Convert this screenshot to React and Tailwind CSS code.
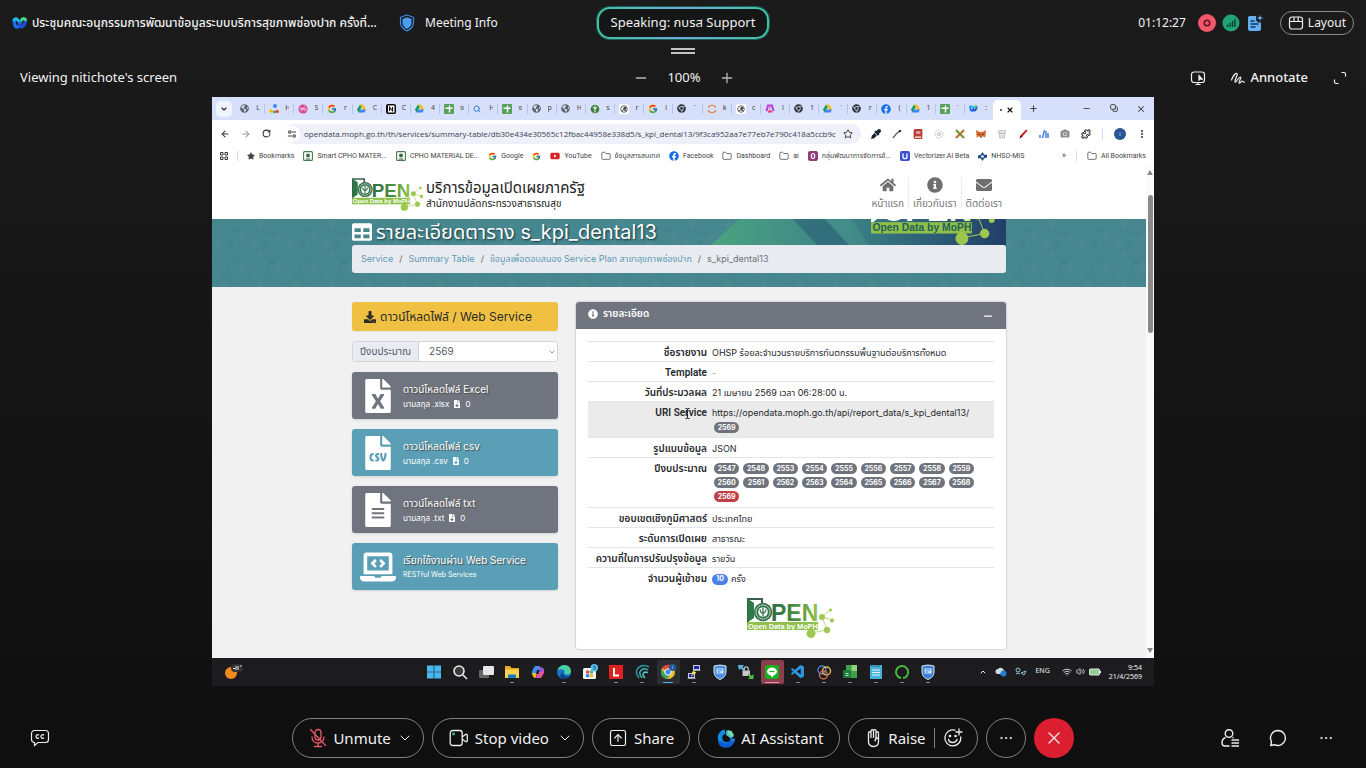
import React from 'react';
import {
  Minus, Plus, X, ChevronDown, ChevronUp, Ellipsis, ArrowLeft, ArrowRight, RotateCw, Star,
  Folder, Copy, Search, Puzzle, EllipsisVertical, Wifi, Volume2, SquareArrowUp,
} from 'lucide-react';
import {
  FaHome, FaInfoCircle, FaEnvelope, FaDownload, FaTable, FaFileExcel, FaFileCsv, FaFileAlt, FaLaptopCode,
  FaFileDownload, FaFacebook, FaYoutube, FaStar, FaChrome, FaGlobeAmericas, FaCamera, FaEyeDropper, FaBook,
} from 'react-icons/fa';
import { FcGoogle } from 'react-icons/fc';
import { VscVscode } from 'react-icons/vsc';

const uiFont = "font-['Noto_Sans','Noto_Sans_Thai',sans-serif]";
const webFont = "font-['Inter','Noto_Sans_Thai',sans-serif]";

/* ---------- small drawings ---------- */

function WebexMark({ className = 'h-4 w-4' }) {
  return (
    <svg className={`shrink-0 ${className}`} viewBox="0 0 16 16" fill="none" strokeLinecap="round">
      <path d="M2.200 5c0 4 1 7 2.800 7S8 9 8.300 6.500" stroke="#1f6feb" strokeWidth="3.400" />
      <path d="M7.500 10.500c2.500 3.500 5.500-.5 6-5.500" stroke="#1d4ed8" strokeWidth="3.400" />
      <path d="M2.200 4.800c.8-1.800 3-1.500 4 1" stroke="#22b8f0" strokeWidth="3" />
      <path d="M9.500 5c1-2 3-2 4-.3" stroke="#3ddc84" strokeWidth="3" />
    </svg>
  );
}

function Shield() {
  return (
    <svg className="h-[18px] w-4" viewBox="0 0 16 18">
      <path d="M8 1l6.500 2.300v5.500c0 4-3 6.600-6.500 8.200C4.500 15.400 1.500 12.800 1.500 8.800V3.300z" fill="none" stroke="#3b8ee8" strokeWidth="1.200" />
      <path d="M8 3.300l4.500 1.600v4c0 2.800-2 4.700-4.500 6-2.500-1.300-4.500-3.200-4.500-6v-4z" fill="#4a9df0" />
    </svg>
  );
}

function DriveIcon() {
  return (
    <svg className="h-[9px] w-[9px]" viewBox="0 0 18 16">
      <path d="M6 0h6l6 10h-6z" fill="#fbbc04" />
      <path d="M6 0L0 10l3 6 6-10.500z" fill="#0f9d58" />
      <path d="M3 16h12l3-6H6z" fill="#4285f4" />
    </svg>
  );
}

function SheetIcon() {
  return (
    <svg className="h-[10px] w-[10px]" viewBox="0 0 10 10">
      <rect width="10" height="10" rx="1" fill="#57a05a" />
      <path d="M5.500 1.500v7M1.500 4.200h7" stroke="#fff" strokeWidth="1.400" />
    </svg>
  );
}

function DotsIcon() {
  return (
    <svg className="h-[10px] w-[10px]" viewBox="0 0 10 10">
      <circle cx="6" cy="2" r="2" fill="#4285f4" /><circle cx="2" cy="7" r="1.800" fill="#fbbc04" />
      <circle cx="8" cy="7.500" r="1.800" fill="#ea4335" /><circle cx="5" cy="8" r="1.200" fill="#34a853" />
    </svg>
  );
}

function BadgeIcon({ bg, fg = '#fff', mark = 'ring' }) {
  return (
    <svg className="h-[10px] w-[10px]" viewBox="0 0 10 10">
      <rect width="10" height="10" rx="2" fill={bg} />
      {mark === 'ring' && <ellipse cx="5" cy="5" rx="1.700" ry="2.500" fill="none" stroke={fg} strokeWidth="1.200" />}
      {mark === 'n' && <><rect x="1.500" y="1" width="7.500" height="8" rx="1" fill="#fff" stroke="#111" /><path d="M3.600 7V3.200l3 3.600V3" fill="none" stroke="#111" strokeWidth="1.100" /></>}
      {mark === 'v' && <path d="M3 2.500v3.200a2 2 0 004 0V2.500" fill="none" stroke={fg} strokeWidth="1.300" />}
      {mark === 'face' && <><circle cx="5" cy="5" r="3.300" fill="none" stroke={fg} strokeWidth=".8" /><circle cx="5.800" cy="4.300" r="1.500" fill={fg} /><path d="M2.500 7q2-2.500 5 0" stroke={fg} fill="none" /></>}
    </svg>
  );
}

function SealIcon({ edge = '#4a7a4c' }) {
  return (
    <svg className="h-[10px] w-[10px]" viewBox="0 0 10 10">
      <rect x=".6" y=".6" width="8.800" height="8.800" rx="1" fill="#fff" stroke={edge} strokeWidth="1.100" />
      <circle cx="5" cy="4.500" r="2" fill="#3f6b43" /><path d="M3 8h4" stroke="#3f6b43" />
    </svg>
  );
}

function TabMark({ kind }) {
  switch (kind) {
    case 'globe': return <FaGlobeAmericas className="h-[9px] w-[9px] text-[#5f6368]" />;
    case 'dots': return <DotsIcon />;
    case 'pink': return <svg className="h-[10px] w-[10px]" viewBox="0 0 10 10"><circle cx="5" cy="5" r="4.600" fill="#d54a94" /><path d="M2 3l6 4M3 7.500l4-5.500M1 5h8" stroke="#fbd3e8" strokeWidth=".8" /></svg>;
    case 'google': return <FcGoogle className="h-[10px] w-[10px]" />;
    case 'drive': return <DriveIcon />;
    case 'n': return <BadgeIcon bg="#111" mark="n" />;
    case 'sheet': return <SheetIcon />;
    case 'search': return <Search className="h-[8px] w-[8px] text-[#3b78d8]" strokeWidth={3} />;
    case 'moph': return <svg className="h-[10px] w-[10px]" viewBox="0 0 10 10"><circle cx="5" cy="5" r="4.300" fill="#3d7f3a" /><path d="M5 1.500v7M2.800 3.500q2.200 2 4.400 0" stroke="#fff" fill="none" /></svg>;
    case 'face': return <BadgeIcon bg="#fff" fg="#444" mark="face" />;
    case 'chrome': return <FaChrome className="h-[9px] w-[9px] text-[#30343b]" />;
    case 'jupyter': return <svg className="h-[10px] w-[10px]" viewBox="0 0 10 10" fill="none" stroke="#e8833a" strokeWidth="1.200"><path d="M1 3.500Q5-1 9 3.500M1 6.500Q5 11 9 6.500" /></svg>;
    case 'a': return <svg className="h-[10px] w-[10px]" viewBox="0 0 10 10" fill="none" strokeWidth="2"><path d="M1.500 7L3 1.500h4L8.500 7" stroke="#b53de0" /><path d="M3 8l2-1 2 1" stroke="#ec3f7c" /><path d="M5 3v2" stroke="#ec3f7c" strokeWidth="1" /></svg>;
    case 'fb': return <FaFacebook className="h-[10px] w-[10px] text-[#1b6ee6]" />;
    default: return <WebexMark className="h-[9px] w-[9px]" />;
  }
}

const tabs = [
  ['globe', 'L'], ['dots', 'H'], ['pink', 'S'], ['google', 'r'], ['drive', 'C'], ['n', 'C'], ['drive', '4'],
  ['sheet', 'ง'], ['search', 'H'], ['sheet', 'ง'], ['globe', 'p'], ['globe', 'H'], ['moph', 'ร'], ['face', 'r'],
  ['google', 'l'], ['chrome', 'ˋ'], ['jupyter', 'k'], ['face', 'c'], ['a', 'l'], ['chrome', '1'], ['drive', 'ˊ'],
  ['chrome', 'r'], ['fb', '('], ['drive', '1'], ['sheet', 'ˊ'],
];

const fileItems = [
  { Icon: FaFileExcel, title: 'ดาวน์โหลดไฟล์ Excel', ext: 'นามสกุล .xlsx', tone: 'bg-[#70747e]' },
  { Icon: FaFileCsv, title: 'ดาวน์โหลดไฟล์ csv', ext: 'นามสกุล .csv', tone: 'bg-[#5a9fb5]' },
  { Icon: FaFileAlt, title: 'ดาวน์โหลดไฟล์ txt', ext: 'นามสกุล .txt', tone: 'bg-[#70747e]' },
];

const years = ['2547', '2548', '2553', '2554', '2555', '2556', '2557', '2558', '2559', '2560', '2561', '2562', '2563', '2564', '2565', '2566', '2567', '2568', '2569'];

function OpenLogo({ className, id, light }) {
  return (
    <svg className={className} viewBox="0 0 88 40" role="img" aria-label="OPEN Data by MoPH">
      <defs>
        <linearGradient id={id} x1="0" x2="1" y1="0" y2="0">
          <stop offset="0" stopColor={light ? '#ffffff' : '#2d6b45'} />
          <stop offset=".55" stopColor={light ? '#ffffff' : '#4c9040'} />
          <stop offset="1" stopColor={light ? '#d4e89a' : '#93c54b'} />
        </linearGradient>
      </defs>
      <path d="M0 0h16v6h-2V2H2v22H0z" fill={light ? '#fff' : '#3f5f4d'} />
      <path d="M1 1l6 4v15l-6 4z" fill={light ? '#fff' : '#2c7a46'} />
      <circle cx="16" cy="14" r="9.200" fill={light ? '#fff' : '#35734c'} />
      <circle cx="16" cy="14" r="7" fill="none" stroke={light ? '#2b6a78' : '#fff'} strokeWidth="1" strokeDasharray="1.500 .7" />
      <circle cx="16" cy="14" r="4.800" fill={light ? '#2b6a78' : '#fff'} />
      <path d="M16 9.500v9M13.200 11.500q0 3.500 2.800 3.500t2.800-3.500" fill="none" stroke={light ? '#fff' : '#35734c'} strokeWidth="1.300" />
      <text x="24" y="23" fontSize="23" fontWeight="700" fontFamily="Liberation Sans, sans-serif" fill={`url(#${id})`}>PEN</text>
      <rect x="0" y="24" width="71" height="8" fill="#8fc04a" />
      <g stroke="#a3cc55" strokeWidth=".7" fill="#9bc84d">
        <path d="M64 35l16-3-5-13 8-7M75 19l10 3" fill="none" />
        <circle cx="64" cy="35.500" r="4.200" /><circle cx="75" cy="19" r="2.800" /><circle cx="83.500" cy="12" r="1.300" />
        <circle cx="85" cy="22.500" r="1.800" /><circle cx="80" cy="32" r="3" />
      </g>
      <text x="1" y="30.500" fontSize="7.300" fontWeight="700" fontFamily="Liberation Sans, sans-serif" fill={light ? '#255f56' : '#fff'}>Open Data by MoPH</text>
    </svg>
  );
}

/* ---------- meeting chrome ---------- */

function MeetingHeader() {
  return (
    <header className="text-[#f2f2f2]">
      <div className="grid h-[46px] grid-cols-[1fr_auto_1fr] items-center pl-3 pr-3">
        <div className="flex items-center">
          <WebexMark />
          <h1 className="ml-1 w-[347px] truncate text-xs font-medium">ประชุมคณะอนุกรรมการพัฒนาข้อมูลระบบบริการสุขภาพช่องปาก ครั้งที่ 1/2569</h1>
          <button className="ml-5 flex items-center gap-2.5 text-xs"><Shield />Meeting Info</button>
        </div>
        <div className="rounded-[13px] bg-linear-to-r from-[#3cc2a4] via-[#6aa9d8] to-[#3cc2a4] p-0.5 ring-1 ring-[#1f5c56]">
          <div className="flex h-7 items-center rounded-[11px] bg-[#151616] px-3 text-[13px]">Speaking: กบรส Support</div>
        </div>
        <div className="flex items-center justify-end">
          <span className="mr-3 text-xs">01:12:27</span>
          <svg className="mr-1.5 h-[18px] w-[18px]" viewBox="0 0 18 18"><circle cx="9" cy="9" r="9" fill="#f4566b" /><circle cx="9" cy="9" r="2.800" fill="none" stroke="#5a1620" strokeWidth="1.500" /></svg>
          <svg className="mr-1.5 h-[18px] w-[18px]" viewBox="0 0 18 18"><circle cx="9" cy="9" r="8.500" fill="#1fa577" /><path d="M5.500 13v-2.500M8 13V9M10.500 13V7M13 13V5" stroke="#0c3f31" strokeWidth="1.400" /></svg>
          <svg className="h-[18px] w-[18px]" viewBox="0 0 18 18"><path d="M3 2h7v4l2 2.500h3V15a2 2 0 01-2 2H4a2 2 0 01-2-2V3.500z" fill="#64b0f5" /><path d="M14 0l1 3 3 1-3 1-1 3-1-3-3-1 3-1z" fill="#64b0f5" stroke="#1a1a1a" strokeWidth=".5" /><path d="M4.500 7h4M4.500 10h8M4.500 13h5" stroke="#173a5c" strokeWidth="1.300" /></svg>
          <button className="ml-4 flex h-6 items-center gap-1 rounded-full border border-[#8a8a8a] px-[7px] text-xs">
            <svg className="h-4 w-4" viewBox="0 0 16 16" fill="none" stroke="currentColor" strokeWidth="1.200"><rect x="1.500" y="2" width="13" height="12" rx="2.500" /><path d="M1.500 6.500h13M6 2v4.500M10.200 2v4.500" /></svg>
            Layout
          </button>
        </div>
      </div>
      <div className="flex h-3 flex-col items-center gap-0.5 pt-0.5">
        <span className="h-0.5 w-6 bg-[#c4c4c4]" />
        <span className="h-0.5 w-6 bg-[#c4c4c4]" />
      </div>
      <div className="grid h-[39px] grid-cols-[1fr_auto_1fr] items-center pl-5 pr-[18px]">
        <p className="text-[13px]">Viewing nitichote's screen</p>
        <div className="flex items-center gap-[18px] text-[13px]">
          <button aria-label="Zoom out"><Minus className="h-4 w-4 text-[#b5b5b5]" /></button>
          <span>100%</span>
          <button aria-label="Zoom in"><Plus className="h-4 w-4 text-[#b5b5b5]" /></button>
        </div>
        <div className="flex items-center justify-end gap-6">
          <button aria-label="Remote control">
            <svg className="h-4 w-4" viewBox="0 0 16 16" fill="none" stroke="#f0f0f0" strokeWidth="1.200"><rect x="1.500" y="2" width="13" height="10.500" rx="2.500" /><path d="M5.500 14.500h5M8 12.500v2" /><path d="M9 5.500v4.500l1.200-1.200 1.800.2z" fill="#f0f0f0" /></svg>
          </button>
          <button className="flex items-center gap-1 text-[13px] font-medium">
            <svg className="h-4 w-4" viewBox="0 0 16 16" fill="none" stroke="#f0f0f0" strokeWidth="1.200" strokeLinecap="round"><path d="M1.500 10C3 6 5.500 3 7 3.500S4 11 5 12s4-5.500 5.500-5-2.500 5-1.500 6 2-2 3-2 .5 1.500 2.500 1" /></svg>
            Annotate
          </button>
          <button aria-label="Full screen">
            <svg className="h-4 w-4" viewBox="0 0 16 16" fill="none" stroke="#f0f0f0" strokeWidth="1.200"><path d="M9.500 2.500h2.500a1.500 1.500 0 011.500 1.500v2.500M2.500 9.500v2.500a1.500 1.500 0 001.500 1.500h2.500" /></svg>
          </button>
        </div>
      </div>
    </header>
  );
}

function Pill({ children, className = '' }) {
  return <div className={`flex h-10 items-center rounded-full border border-[#828282] text-[15px] text-[#f2f2f2] ${className}`}>{children}</div>;
}

function MeetingControls() {
  return (
    <footer className="grid grid-cols-[1fr_auto_1fr] items-center px-[28px] pb-2.5 pt-8 text-[#ededed]">
      <div><button aria-label="Closed captions" className="flex h-6 w-6 items-center justify-center">
        <svg className="h-5 w-5" viewBox="0 0 20 20" fill="none" stroke="currentColor" strokeWidth="1.200"><path d="M4.500 2.500h11a3 3 0 013 3v6a3 3 0 01-3 3H8l-3.500 3V14.500a3 3 0 01-3-3v-6a3 3 0 013-3z" /><path d="M9 7.200a1.800 1.800 0 100 2.600M14 7.200a1.800 1.800 0 100 2.600" /></svg>
      </button></div>
      <div className="flex items-center gap-2">
        <Pill className="gap-1.5 pl-4 pr-2.5">
          <button className="flex items-center gap-1.5">
            <svg className="h-5 w-[18px]" viewBox="0 0 18 20" fill="none" stroke="#e85a66" strokeWidth="1.300" strokeLinecap="round"><rect x="6" y="1.500" width="6" height="10.500" rx="3" /><path d="M3 9c0 3.500 2.500 6 6 6s6-2.500 6-6M9 15v3.500M5.500 18.500h7M1.500 1.500l15 16" /></svg>
            Unmute
          </button>
          <button aria-label="Audio options"><ChevronDown className="h-4 w-4" strokeWidth={1.5} /></button>
        </Pill>
        <Pill className="gap-2 pl-4 pr-2.5">
          <button className="flex items-center gap-1.5">
            <svg className="h-5 w-5" viewBox="0 0 20 20" fill="none" stroke="#ededed" strokeWidth="1.300"><rect x="1.200" y="2.500" width="12" height="15" rx="2.500" /><path d="M13.200 9l3.300-2.500c1-.6 1.800-.2 1.800.8v5.400c0 1-.8 1.400-1.800.8L13.200 11" /><circle cx="4.500" cy="6" r=".8" fill="#2fbf8f" stroke="#2fbf8f" /></svg>
            Stop video
          </button>
          <button aria-label="Video options"><ChevronDown className="h-4 w-4" strokeWidth={1.5} /></button>
        </Pill>
        <button><Pill className="gap-1.5 px-[15px]"><SquareArrowUp className="h-5 w-5" strokeWidth={1.4} />Share</Pill></button>
        <button><Pill className="gap-1 px-4">
          <svg className="h-[22px] w-[22px]" viewBox="0 0 22 22" fill="none" strokeWidth="4.500"><path d="M10 4.500a6.500 6.500 0 108 7" stroke="#1389e8" /><path d="M5 15a6.500 6.500 0 0012-1" stroke="#0b5fd0" /><path d="M12.500 3l4 1 2.500 4-3 2-3.500-3z" fill="#6ee0a0" stroke="none" /><path d="M12 3.500v4l4 3 2.500-2" stroke="#54cbe8" strokeWidth="1.500" /></svg>
          AI Assistant
        </Pill></button>
        <Pill className="gap-2 pl-4 pr-3.5">
          <button className="flex items-center gap-1.5">
            <svg className="h-5 w-[17px]" viewBox="0 0 17 20" fill="none" stroke="#ededed" strokeWidth="1.300" strokeLinejoin="round"><path d="M3.500 11V5a1.200 1.200 0 012.500 0V3a1.200 1.200 0 012.500 0v-.2a1.200 1.200 0 012.500.2v2a1.200 1.200 0 012.500 0v8.500c0 3-2 5-5 5s-4.500-2-5-4zM6 5v5M8.500 3v7M11 5v5M13.500 10c-2.500 0-3.500 2-3.500 3.500" /></svg>
            Raise
          </button>
          <span className="h-5 w-px bg-[#828282]" />
          <button aria-label="Reactions">
            <svg className="h-5 w-5" viewBox="0 0 20 20" fill="none" stroke="#ededed" strokeWidth="1.300" strokeLinecap="round"><path d="M12 2.200A8 8 0 1017.800 9M5.500 11.500c.8 4 7.500 4 8.500 0M16 1v6M13 4h6" /><circle cx="7" cy="8" r=".7" fill="#ededed" /><circle cx="12.500" cy="8" r=".7" fill="#ededed" /></svg>
          </button>
        </Pill>
        <button aria-label="More options" className="flex h-10 w-10 items-center justify-center rounded-full border border-[#828282]"><Ellipsis className="h-4 w-4" strokeWidth={1.5} /></button>
        <button aria-label="Leave meeting" className="flex h-10 w-10 items-center justify-center rounded-full bg-[#dc1f30]"><X className="h-5 w-5" strokeWidth={1.5} /></button>
      </div>
      <div className="flex justify-end gap-6">
        <button aria-label="Participants" className="flex h-6 w-6 items-center justify-center">
          <svg className="h-5 w-5" viewBox="0 0 20 20" fill="none" stroke="currentColor" strokeWidth="1.400"><circle cx="9" cy="5.500" r="3.800" /><path d="M5.500 9.500C3 10.500 2 12.500 2 15c0 2 1 3 3 3h4.500M11.500 12H19M11.500 15H19M11.500 18H19M12.500 9.500l1 .5" /></svg>
        </button>
        <button aria-label="Chat" className="flex h-6 w-6 items-center justify-center">
          <svg className="h-[18px] w-[18px]" viewBox="0 0 18 18" fill="none" stroke="currentColor" strokeWidth="1.400" strokeLinejoin="round"><path d="M9 1.500a7.500 7.500 0 11-3.500 14.200L1.800 16.500l.7-3.800A7.500 7.500 0 019 1.500z" /></svg>
        </button>
        <button aria-label="More panels" className="flex h-6 w-6 items-center justify-center"><Ellipsis className="h-4 w-4" strokeWidth={1.5} /></button>
      </div>
    </footer>
  );
}

/* ---------- shared browser ---------- */

function TabStrip() {
  return (
    <div className="flex h-[23px] items-center bg-[#d6e0fb] text-[7px] text-[#444]">
      <button aria-label="Search tabs" className="ml-1 flex h-4 w-4 items-center justify-center rounded-[5px] bg-[#eef3fe]"><ChevronDown className="h-2 w-2 text-[#222]" strokeWidth={3.5} /></button>
      <div className="ml-1 flex min-w-0 flex-1">
        {tabs.map(([kind, letter], i) => (
          <button key={i} className="flex min-w-0 flex-1 items-center gap-1.5 border-r border-[#b4c3ea] pl-1">
            <span className="flex h-[10px] w-[10px] shrink-0 items-center"><TabMark kind={kind} /></span>
            <span className="w-1 overflow-hidden">{letter}</span>
          </button>
        ))}
        <button className="flex min-w-0 flex-1 items-center gap-1.5 pl-1"><span className="flex h-[10px] w-[10px] items-center"><TabMark kind="webex" /></span><span>:</span></button>
      </div>
      <div className="flex h-5 w-7 items-center justify-center gap-1 self-end rounded-t-[5px] bg-white"><span className="h-0.5 w-0.5 rounded-full bg-[#333]" /><button aria-label="Close tab"><X className="h-2 w-2 text-[#111]" strokeWidth={3.5} /></button></div>
      <button aria-label="New tab" className="flex w-6 justify-center"><Plus className="h-[9px] w-[9px]" strokeWidth={3} /></button>
      <div className="ml-[28px] flex">
        <button aria-label="Minimize" className="flex w-[27px] justify-center"><Minus className="h-[9px] w-[9px]" strokeWidth={2.5} /></button>
        <button aria-label="Restore" className="flex w-[27px] justify-center"><Copy className="h-2 w-2 -scale-x-100 rotate-90" strokeWidth={3} /></button>
        <button aria-label="Close" className="flex w-[27px] justify-center"><X className="h-[10px] w-[10px]" strokeWidth={2.5} /></button>
      </div>
    </div>
  );
}

function AddressBar() {
  const ic = 'h-[10px] w-[10px]';
  return (
    <div className="flex h-[27px] items-center bg-white pl-2 pr-[7px] text-[#333]">
      <div className="flex w-16 shrink-0 items-center gap-[11px]">
        <button aria-label="Back"><ArrowLeft className={ic} strokeWidth={2.5} /></button>
        <button aria-label="Forward"><ArrowRight className="h-[10px] w-[10px] text-[#999]" strokeWidth={2.5} /></button>
        <button aria-label="Reload"><RotateCw className="h-[9px] w-[9px]" strokeWidth={2.8} /></button>
      </div>
      <div className="flex h-5 min-w-0 flex-1 items-center rounded-full bg-[#eef0fa] pr-2">
        <span className="flex h-4 w-4 shrink-0 items-center justify-center rounded-full bg-white">
          <svg className="h-2 w-2" viewBox="0 0 8 8" fill="none" stroke="#444" strokeWidth="1.100"><circle cx="1.800" cy="2" r="1.200" /><path d="M4 2h4M0 6h4" /><circle cx="6.200" cy="6" r="1.200" /></svg>
        </span>
        <input aria-label="Address" className="ml-1 min-w-0 flex-1 bg-transparent font-['Open_Sans',sans-serif] text-[8px] text-[#3c3f52] outline-none" defaultValue="opendata.moph.go.th/th/services/summary-table/db30e434e30565c12fbac44958e338d5/s_kpi_dental13/9f3ca952aa7e77eb7e790c418a5ccb9c" />
        <button aria-label="Bookmark this page"><Star className={ic} strokeWidth={2.3} /></button>
      </div>
      <div className="ml-[10px] flex items-center gap-[11px]">
        <FaEyeDropper className="h-[10px] w-[10px] text-[#1d2238]" />
        <svg className={ic} viewBox="0 0 10 10"><path d="M1 9q3-5 7-7" stroke="#444" fill="none" strokeWidth="1.200" /><circle cx="8" cy="2" r="1.300" fill="#333" /></svg>
        <FaBook className="h-[10px] w-[10px] text-[#b93b35]" />
        <svg className={ic} viewBox="0 0 10 10" fill="none" stroke="#bbb"><circle cx="5" cy="5" r="4" strokeDasharray="1.500 1" /><circle cx="5" cy="5" r="1.500" /></svg>
        <svg className={ic} viewBox="0 0 10 10" strokeWidth="2.300"><path d="M1 1l8 8" stroke="#6f9b3c" /><path d="M9 1L1 9" stroke="#b5793a" /></svg>
        <svg className={ic} viewBox="0 0 10 10"><path d="M0 1l3.500 2h3L10 1 9.300 8.500l-2.300-1H3l-2.300 1z" fill="#dd6b2b" /><path d="M2.500 5l1.500.7M7.500 5L6 5.700M4 8h2" stroke="#3a2010" /></svg>
        <svg className={ic} viewBox="0 0 10 10" fill="#e3e3e3" stroke="#bdbdbd" strokeWidth=".8"><path d="M1.500 1.500h7v3h-7zM2.500 4.500h5V9h-5z" /></svg>
        <svg className={ic} viewBox="0 0 10 10"><path d="M8 .5l1.500 1L4.500 7.500 1.500 9.500 2.500 6.500z" fill="#c4262b" /><path d="M2.500 6.500l2 1-3 2z" fill="#5a1014" /></svg>
        <svg className={ic} viewBox="0 0 10 10" stroke="#4a7fe0" strokeWidth="1.500"><path d="M1 9V6M3.500 9l2-8M7 9V2M9 9V4" /></svg>
        <FaCamera className="h-[9px] w-[10px] text-[#8d8d8d]" />
        <Puzzle className={ic} strokeWidth={2.5} />
        <span className="h-3 w-px bg-[#d0daf5]" />
        <svg className="h-3 w-3" viewBox="0 0 12 12"><circle cx="6" cy="6" r="6" fill="#2a5596" /><path d="M6 4v4" stroke="#8fb0e0" /></svg>
        <EllipsisVertical className={ic} strokeWidth={3} />
      </div>
    </div>
  );
}

function Bookmark({ icon, children }) {
  return <a href="#" className="flex shrink-0 items-center gap-1 whitespace-nowrap">{icon}{children}</a>;
}

function BookmarksBar() {
  const folder = <Folder className="h-[10px] w-[10px] text-[#555]" strokeWidth={2} />;
  return (
    <nav className="flex h-[18px] items-center justify-between bg-white px-2 font-['Roboto','Noto_Sans_Thai',sans-serif] text-[7px] text-[#3f3f46]">
      <div className="flex items-center gap-[9px]">
        <svg className="h-2 w-2" viewBox="0 0 8 8" fill="none" stroke="#333"><path d="M.5.5h2.500v2.500H.5zM5 .5h2.500v2.500H5zM.5 5h2.500v2.500H.5zM5 5h2.500v2.500H5z" /></svg>
        <span className="h-[10px] w-px bg-[#d0daf5]" />
        <Bookmark icon={<FaStar className="h-2 w-2 text-[#444]" />}>Bookmarks</Bookmark>
        <Bookmark icon={<SealIcon />}>Smart CPHO MATER...</Bookmark>
        <Bookmark icon={<SealIcon />}>CPHO MATERIAL DE...</Bookmark>
        <Bookmark icon={<FcGoogle className="h-[9px] w-[9px]" />}>Google</Bookmark>
        <Bookmark icon={<FcGoogle className="h-[9px] w-[9px]" />} />
        <Bookmark icon={<FaYoutube className="h-[10px] w-[10px] text-[#d8232a]" />}>YouTube</Bookmark>
        <Bookmark icon={folder}>ข้อมูลสารสนเทศ</Bookmark>
        <Bookmark icon={<FaFacebook className="h-[10px] w-[10px] text-[#1b6ee6]" />}>Facebook</Bookmark>
        <Bookmark icon={folder}>Dashboard</Bookmark>
        <Bookmark icon={folder}>ai</Bookmark>
        <Bookmark icon={<BadgeIcon bg="#943a7d" />}>กลุ่มพัฒนาการจัดการข้...</Bookmark>
        <Bookmark icon={<BadgeIcon bg="#3e4fd0" mark="v" />}>Vectorizer.AI Beta</Bookmark>
        <Bookmark icon={<svg className="h-[9px] w-[9px]" viewBox="0 0 10 10"><path d="M5 0l2 3h3v3L7 7l-2 3-2-3H0V4l3-1z" fill="#20498c" /><circle cx="5" cy="5" r="1.500" fill="#fff" /></svg>}>NHSO-MIS</Bookmark>
      </div>
      <div className="flex items-center gap-2.5"><span className="text-[9px]">»</span><span className="h-[10px] w-px bg-[#d0daf5]" /><Bookmark icon={folder}>All Bookmarks</Bookmark></div>
    </nav>
  );
}

function SiteHeader() {
  const links = [[FaHome, 'หน้าแรก'], [FaInfoCircle, 'เกี่ยวกับเรา'], [FaEnvelope, 'ติดต่อเรา']];
  return (
    <header className="flex h-[54px] items-center justify-between bg-white px-[140px]">
      <div className="flex items-center gap-0.5 pt-1">
        <OpenLogo id="logo-head" className="h-[33px] w-[72px]" />
        <div className="text-[#222]">
          <p className="text-[15px] leading-[18px]">บริการข้อมูลเปิดเผยภาครัฐ</p>
          <p className="text-[10px] leading-3">สำนักงานปลัดกระทรวงสาธารณสุข</p>
        </div>
      </div>
      <nav className="flex divide-x divide-[#ededed] pt-0.5 text-[10px] text-[#777]">
        {links.map(([Icon, label]) => (
          <a key={label} href="#" className="flex flex-col items-center gap-1 px-1 leading-3"><Icon className="h-4 w-4 text-[#6f6f6f]" />{label}</a>
        ))}
      </nav>
    </header>
  );
}

function Banner() {
  return (
    <section className="relative overflow-hidden bg-[#47878f] px-[140px] pb-3.5">
      <svg className="absolute inset-0 h-full w-full" aria-hidden="true">
        <defs>
          <pattern id="weave" width="36" height="30" patternUnits="userSpaceOnUse">
            <path d="M0 3h36M0 9h36M0 15h36M0 21h36M0 27h36M3 0v30M9 0v30M15 0v30M21 0v30M27 0v30M33 0v30" stroke="#3e7f88" strokeWidth="1" opacity=".3" />
            <path d="M9 3h6v6H9zM27 15h6v6h-6zM3 21h6v6H3z" fill="#55929a" opacity=".3" /><path d="M21 9h6v6h-6zM15 21h6v6h-6z" fill="#3a7a84" opacity=".25" />
          </pattern>
        </defs>
        <rect width="100%" height="100%" fill="url(#weave)" />
      </svg>
      <div className="relative flex h-[26px] items-center overflow-hidden">
        <svg className="absolute right-0 top-0 h-full w-[295px]" viewBox="0 0 295 26" preserveAspectRatio="none" aria-hidden="true">
          <defs><linearGradient id="sweep"><stop offset="0" stopColor="#4ba37f" /><stop offset=".45" stopColor="#3c8387" /><stop offset="1" stopColor="#213f68" /></linearGradient></defs>
          <path d="M0 26L28 0h267v26z" fill="url(#sweep)" />
          <path d="M82 0h32l24 26h-32z" fill="#2d6577" opacity=".7" /><path d="M114 0h26l18 26h-20z" fill="#4a9c8c" opacity=".4" />
        </svg>
        <OpenLogo id="logo-banner" light className="absolute bottom-0 right-2.5 h-[57px] w-[125px]" />
        <h2 className="relative flex items-center gap-1 text-[20px] leading-[26px] text-white [text-shadow:1px_1px_2px_#12343a]"><FaTable className="h-5 w-5" />รายละเอียดตาราง s_kpi_dental13</h2>
      </div>
      <nav className="relative flex h-7 items-center gap-1.5 rounded-[3px] bg-[#e9ebf0] px-[9px] text-[9px] text-[#5b9bb2]">
        <a href="#">Service</a><span className="text-[#666]">/</span>
        <a href="#">Summary Table</a><span className="text-[#666]">/</span>
        <a href="#">ข้อมูลเพื่อตอบสนอง Service Plan สาขาสุขภาพช่องปาก</a><span className="text-[#666]">/</span>
        <span className="text-[#6c717b]">s_kpi_dental13</span>
      </nav>
    </section>
  );
}

function DownloadColumn() {
  return (
    <aside className="flex w-[206px] shrink-0 flex-col gap-2.5">
      <h3 className="flex h-[29px] items-center gap-1 rounded-[3px] bg-[#f0c043] px-3 text-xs text-[#2b2b2b] shadow-xs"><FaDownload className="h-3 w-3" />ดาวน์โหลดไฟล์ / Web Service</h3>
      <div className="flex h-[21px] rounded-[3px] border border-[#d3d5dc] bg-white text-[10px] text-[#555b68]">
        <label htmlFor="year" className="flex items-center border-r border-[#d3d5dc] bg-[#e9ebf3] px-[7px]">ปีงบประมาณ</label>
        <div className="relative flex flex-1 items-center">
          <select id="year" defaultValue="2569" className="h-full w-full appearance-none bg-transparent pl-2.5 text-[10px] outline-none"><option>2569</option><option>2568</option></select>
          <ChevronDown className="pointer-events-none absolute right-px h-2 w-2" />
        </div>
      </div>
      {fileItems.map(({ Icon, title, ext, tone }) => (
        <a key={title} href="#" className={`flex h-[47px] items-center rounded-[3px] text-white shadow-sm ${tone}`}>
          <span className="flex w-[51px] justify-center"><Icon className="h-[34px] w-[26px]" /></span>
          <span className="flex flex-col gap-0.5">
            <span className="text-[10px] leading-3.5 [text-shadow:1px_1px_1px_#444]">{title}</span>
            <span className="flex items-center gap-1 text-[8px] leading-3">{ext}<FaFileDownload className="h-2 w-2" />0</span>
          </span>
        </a>
      ))}
      <a href="#" className="flex h-[47px] items-center rounded-[3px] bg-[#5a9fb5] text-white shadow-sm">
        <span className="flex w-[51px] justify-center"><FaLaptopCode className="h-9 w-9" /></span>
        <span className="flex flex-col gap-0.5">
          <span className="text-[10px] leading-3.5 [text-shadow:1px_1px_1px_#444]">เรียกใช้งานผ่าน Web Service</span>
          <span className="text-[7px] leading-3">RESTful Web Services</span>
        </span>
      </a>
    </aside>
  );
}

function YearBadge({ year, active }) {
  return <a href="#" className={`flex h-[11px] items-center justify-center rounded-full text-[7px] font-bold text-white ${active ? 'bg-[#c04048]' : 'bg-[#6f737c]'}`}>{year}</a>;
}

function Row({ label, children, className = 'h-5' }) {
  return (
    <tr className={`border-t border-[#e4e5e8] align-top ${className}`}>
      <th className="w-[119px] whitespace-nowrap p-0 pt-1 text-right font-['Roboto','Noto_Sans_Thai',sans-serif] text-[10px] font-semibold leading-3.5">{label}</th>
      <td className="p-0 pl-[5px] pt-1 leading-3.5">{children}</td>
    </tr>
  );
}

function DetailPanel() {
  return (
    <section className="min-w-0 flex-1 rounded-[3px] bg-white shadow-[0_0_2px_#999]">
      <h3 className="flex h-[27px] items-center justify-between rounded-t-[3px] bg-[#70747e] px-3 pb-1 text-[10px] font-semibold text-white">
        <span className="flex items-center gap-[5px]"><FaInfoCircle className="h-[10px] w-[10px]" />รายละเอียด</span>
        <button aria-label="Collapse" className="pt-1"><Minus className="h-3 w-3" strokeWidth={2.5} /></button>
      </h3>
      <div className="px-3 pb-[11px] pt-3">
        <table className="w-full border-collapse text-[9px] text-[#26282c]">
          <tbody>
            <Row label="ชื่อรายงาน">OHSP ร้อยละจำนวนรายบริการทันตกรรมพื้นฐานต่อบริการทั้งหมด</Row>
            <Row label="Template"><span className="text-[#aaa]">-</span></Row>
            <Row label="วันที่ประมวลผล">21 เมษายน 2569 เวลา 06:28:00 น.</Row>
            <Row label="URI Service" className="h-9 bg-[#ebebeb]">
              https://opendata.moph.go.th/api/report_data/s_kpi_dental13/
              <div className="ml-0.5 mt-0.5 grid w-[260px] grid-cols-9 gap-1"><YearBadge year="2569" /></div>
            </Row>
            <Row label="รูปแบบข้อมูล">JSON</Row>
            <Row label="ปีงบประมาณ" className="h-[50px]">
              <div className="ml-0.5 mt-px grid w-[260px] grid-cols-9 gap-x-1 gap-y-[3px]">
                {years.map((y) => <YearBadge key={y} year={y} active={y === '2569'} />)}
              </div>
            </Row>
            <Row label="ขอบเขตเชิงภูมิศาสตร์">ประเทศไทย</Row>
            <Row label="ระดับการเปิดเผย">สาธารณะ</Row>
            <Row label="ความถี่ในการปรับปรุงข้อมูล">รายวัน</Row>
            <Row label="จำนวนผู้เข้าชม"><span className="flex items-center gap-[3px]"><span className="flex h-[11px] w-4 items-center justify-center rounded-full bg-[#4a80e8] text-[7px] font-bold text-white">10</span>ครั้ง</span></Row>
          </tbody>
        </table>
        <OpenLogo id="logo-panel" className="mx-auto mt-2.5 h-10 w-[88px]" />
      </div>
    </section>
  );
}

function Browser() {
  return (
    <div className="bg-white">
      <TabStrip />
      <AddressBar />
      <BookmarksBar />
      <div className="flex">
        <main className={`min-w-0 flex-1 bg-[#f1f1f1] ${webFont}`}>
          <SiteHeader />
          <Banner />
          <div className="relative flex gap-[18px] px-[140px] pb-[9px] pt-[15px]">
            <DownloadColumn />
            <DetailPanel />
            <svg className="pointer-events-none absolute left-[473px] top-[121px] h-[11px] w-[5px]" viewBox="0 0 5 11" fill="none" stroke="#222" strokeWidth="1" aria-hidden="true"><path d="M.5.5h1.500q.5 0 .5.500v9q0 .5-.5.500H.5M4.500.5H3M4.500 10.500H3" /></svg>
          </div>
        </main>
        <div className="flex w-2 flex-col items-center bg-[#fafafa] py-1">
          <svg className="h-2 w-1.5" viewBox="0 0 6 8"><path d="M0 6l3-5 3 5z" fill="#888" /></svg>
          <span className="mt-[18px] h-[138px] w-[5px] rounded-full bg-[#8a8a8a]" />
          <svg className="mt-auto h-2 w-1.5" viewBox="0 0 6 8"><path d="M0 2l3 5 3-5z" fill="#888" /></svg>
        </div>
      </div>
    </div>
  );
}

const svgBox = 'h-4 w-4';
const taskApps = [
  ['Start', <svg className={svgBox} viewBox="0 0 16 16" fill="#47b9f2"><path d="M1 1.500h6.700v6.200H1zM8.300 1.500H15v6.200H8.300zM1 8.300h6.700v6.200H1zM8.300 8.300H15v6.200H8.300z" /></svg>],
  ['Search', <svg className={svgBox} viewBox="0 0 16 16" fill="none" stroke="#e8e8e8" strokeWidth="1.600"><circle cx="7" cy="7" r="5" fill="#3a3a3a" /><path d="M10.800 10.800L15 15" /></svg>],
  ['Task view', <svg className={svgBox} viewBox="0 0 16 16"><rect x="1" y="6" width="10" height="8" rx="1" fill="#666" /><rect x="5" y="2" width="11" height="9" rx="1" fill="#e6e6e6" /></svg>],
  ['Files', <svg className={svgBox} viewBox="0 0 16 16"><path d="M1 2h5l1.500 2H15v10H1z" fill="#e8a824" /><path d="M1 5.500h14V14H1z" fill="#fcd053" /><path d="M4 10.500h8V14H4z" fill="#1879b8" /></svg>, 1],
  ['Copilot', <svg className={svgBox} viewBox="0 0 16 16"><path d="M5 2h5L7.500 11H2q-1-3 1-6z" fill="#3a8ef0" /><path d="M9 3l4 1q2 2 1 5l-3 5H6z" fill="#e0559c" /><path d="M2 9h5l-1.500 5q-3 0-3.500-5z" fill="#f5b52a" /><path d="M10 3l3.500 1.500L12 8H9z" fill="#7a5cf0" /><path d="M7 6h2.500L8.500 10H6z" fill="#1c1c1e" /></svg>],
  ['Edge', <svg className={svgBox} viewBox="0 0 16 16"><circle cx="8" cy="8" r="7" fill="#1477cf" /><path d="M1.500 6Q4 1 8.500 1q6 .5 6.500 6 0 3.500-4 3.500-3-.2-2.500-2Q9 6 6.500 5.500 4 5 1.500 6z" fill="#49cf9b" /><path d="M6.500 7.500q-1 4 3.500 5 2 .3 3.500-.5-4 4.500-8 2Q3 12 6.500 7.500z" fill="#0b3f80" /></svg>, 1],
  ['Store', <svg className={svgBox} viewBox="0 0 16 16"><rect x="1" y="4" width="13" height="11" rx="1.500" fill="#eef4f8" /><path d="M4 6.500h3.200v3H4z" fill="#e84b3c" /><path d="M7.800 6.500H11v3H7.800z" fill="#5bb55a" /><path d="M4 10.200h3.200v3H4z" fill="#2a8de0" /><path d="M7.800 10.200H11v3H7.800z" fill="#f2b52c" /><circle cx="12.300" cy="3.700" r="3.700" fill="#58c1f5" /><path d="M11 2.200h2.500L12.300 3.500q1.500 0 1.200 1.200-.8 1-2.500.3" stroke="#15516f" fill="none" strokeWidth=".8" /></svg>],
  ['L app', <svg className={svgBox} viewBox="0 0 16 16"><rect x="1" y="1" width="14" height="14" fill="#e0201f" /><path d="M6 4v7.500h5" fill="none" stroke="#fff" strokeWidth="2" /></svg>, 1],
  ['Wave', <svg className={svgBox} viewBox="0 0 16 16" fill="none" strokeWidth="1.500"><path d="M5 14Q-1 6 7 2q4-1.500 8 1" stroke="#2b98a5" /><path d="M8 14Q3 8 9 5q3-1 5 1" stroke="#3bb5b8" /><path d="M11 14Q7 10 11 8l3 .5" stroke="#56d0c8" /></svg>, 1],
  ['Chrome', <svg className={svgBox} viewBox="0 0 16 16"><circle cx="8" cy="8" r="7" fill="#f2bf2a" /><path d="M8 8L2 4.300A7 7 0 0114.500 5H8z" fill="#de4437" /><path d="M8 8L5 9.500 1.700 5A7 7 0 007.500 15L10 10z" fill="#37a355" /><circle cx="8" cy="8" r="3.200" fill="#4285f4" stroke="#fff" /><circle cx="12.500" cy="3.500" r="3.500" fill="#215c9e" /><path d="M12.500 2.300v2.400" stroke="#6da5e0" /></svg>, 2],
  ['Putty', <svg className={svgBox} viewBox="0 0 16 16"><rect x="7" y="1" width="7" height="5" fill="#c9cbd2" /><rect x="8" y="2" width="5" height="3" fill="#2222b0" /><path d="M7 7h8l-1-1H7z" fill="#9a9ca6" /><rect x="2" y="9" width="7" height="5" fill="#c9cbd2" /><rect x="3" y="10" width="5" height="3" fill="#2222b0" /><path d="M1 15h9l-1-1H2z" fill="#9a9ca6" /><path d="M10 6L6 8.500h4L5 12" stroke="#f1dd3a" fill="none" /></svg>, 1],
  ['Security', <svg className={svgBox} viewBox="0 0 16 16"><path d="M2 2q6-2 12 0v6q0 5-6 7.500Q2 13 2 8z" fill="#4a8fe0" stroke="#d8e6f5" /><path d="M4.500 4.500h7v5h-7z" fill="#d8e6f5" /><path d="M5.500 6h5M5.500 8h3" stroke="#3a80d4" /></svg>],
  ['Lock', <svg className={svgBox} viewBox="0 0 16 16"><path d="M0 1h6L4.500 3 7 5.500 5.500 7 3 4.500 1 6z" fill="#55b6e6" /><rect x="4.500" y="6.500" width="7.500" height="5.500" fill="#c8c8c8" /><path d="M6.200 6.500V4.800a2 2 0 014 0v1.700" stroke="#c8c8c8" strokeWidth="1.200" fill="none" /><path d="M15.500 15h-5.500l1.800-1.800L9.500 11l1.500-1.500 2.500 2.300 2-1.800z" fill="#54b948" /></svg>],
  ['LINE', <svg className={svgBox} viewBox="0 0 16 16"><rect x="1" y="1" width="14" height="14" rx="2" fill="#18b01c" /><ellipse cx="8" cy="7.500" rx="5" ry="4" fill="#fff" /><path d="M7 11l.5 2.500 3.500-3z" fill="#fff" /><path d="M5.500 7.500h5" stroke="#18b01c" strokeWidth="1.200" /></svg>, 3],
  ['Code', <VscVscode className="h-4 w-4 text-[#2a95dc]" />, 1],
  ['Rings', <svg className={svgBox} viewBox="0 0 16 16" fill="none" strokeWidth="1.400"><circle cx="6" cy="6" r="4" stroke="#4a80e0" /><circle cx="10.500" cy="7" r="4" stroke="#e6c04a" /><circle cx="7.500" cy="11" r="4" stroke="#d96a4c" /></svg>, 1],
  ['Cards', <svg className={svgBox} viewBox="0 0 16 16"><path d="M4 1h11v13H4z" fill="#3f9f46" /><path d="M9.500 1H15v6H9.500z" fill="#8fd17c" /><rect x="1" y="6" width="8" height="8" rx="1" fill="#1b7a3a" /><path d="M3.500 9.500h3M3.500 11.500h3" stroke="#c4e8b8" /></svg>, 1],
  ['Notepad', <svg className={svgBox} viewBox="0 0 16 16"><rect x="2" y="1" width="12" height="14" rx="1" fill="#49b3dc" /><path d="M4 6h8M4 8.500h8M4 11h8" stroke="#dff4fb" /><path d="M3 2h10" stroke="#1f6d90" strokeWidth="1.500" strokeDasharray="1.500 1" /></svg>, 1],
  ['Loop', <svg className={svgBox} viewBox="0 0 16 16" fill="none" stroke="#48b83d" strokeWidth="2"><path d="M4 12.500A6 6 0 0112 3.500M12 3.500a6 6 0 01-3 10.500M7 14q-2-.3-3-1.500" /></svg>, 1],
  ['Defender', <svg className={svgBox} viewBox="0 0 16 16"><path d="M2 2q6-2 12 0v6q0 5-6 7.500Q2 13 2 8z" fill="#3a80d4" stroke="#d8e6f5" /><path d="M4.500 4.500h7v5h-7z" fill="#d8e6f5" /><path d="M5.500 6h5M5.500 8h3" stroke="#3a80d4" /></svg>, 1],
];

function Taskbar() {
  const frames = { 2: 'bg-[#2d2e33]', 3: 'bg-[#8d3f50]' };
  const marks = { 1: 'w-1 bg-[#8a8a8a]', 2: 'w-2.5 bg-[#4fb4ea]', 3: 'w-3.5 bg-[#ef8fa2]' };
  return (
    <div className="grid h-7 grid-cols-[1fr_auto_1fr] items-center bg-[#1c1c1e] pl-2 pr-3 text-[#f0f0f0]">
      <div>
        <svg className="h-5 w-6" viewBox="0 0 24 20"><circle cx="11" cy="11" r="6" fill="#f08a1d" /><rect x="11" y="2" width="12" height="8" rx="4" fill="#333" /><path d="M13 6.500h2M16 4v4M18 4v4M20 4h1.500" stroke="#eee" /></svg>
      </div>
      <div className="flex">
        {taskApps.map(([name, icon, state]) => (
          <button key={name} aria-label={name} className="flex h-7 w-[26px] flex-col items-center justify-center">
            <span className={`flex h-6 w-[23px] flex-col items-center justify-center gap-0.5 rounded-xs pt-1 ${frames[state] || ''}`}>
              {icon}<span className={`h-px shrink-0 rounded-full ${marks[state] || 'w-1'}`} />
            </span>
          </button>
        ))}
      </div>
      <div className="flex items-center justify-end gap-2 text-[7px]">
        <ChevronUp className="h-2 w-2" strokeWidth={3} />
        <svg className="h-[10px] w-3" viewBox="0 0 12 10"><path d="M3 7a2.500 2.500 0 010-5q3-3 6 1v4z" fill="#d4dbe2" /><circle cx="8.500" cy="6.500" r="3" fill="#1e7fd8" /></svg>
        <svg className="h-[10px] w-3" viewBox="0 0 12 10" fill="none" stroke="#8ec6d6"><circle cx="3" cy="3" r="2" /><path d="M1 7q2-2 4 0M6 6l5-2-2 4z" /></svg>
        <span>ENG</span>
        <div className="ml-1 flex items-center gap-1"><Wifi className="h-[10px] w-[10px]" /><Volume2 className="h-[9px] w-[9px]" />
          <svg className="h-2 w-3" viewBox="0 0 12 8"><rect x=".5" y="1" width="10" height="6" rx="1" fill="#8fcf94" stroke="#e6e6e6" /><path d="M11.500 3v2" stroke="#e6e6e6" /></svg></div>
        <time className="text-right leading-[9px]">9:54<br />21/4/2569</time>
      </div>
    </div>
  );
}

export default function App() {
  return (
    <div className={`flex min-h-screen flex-col bg-linear-to-b from-[#1b1b1b] to-[#0f0f0f] ${uiFont}`}>
      <MeetingHeader />
      <div className="flex-1 px-[212px]">
        <Browser />
        <Taskbar />
      </div>
      <MeetingControls />
    </div>
  );
}
